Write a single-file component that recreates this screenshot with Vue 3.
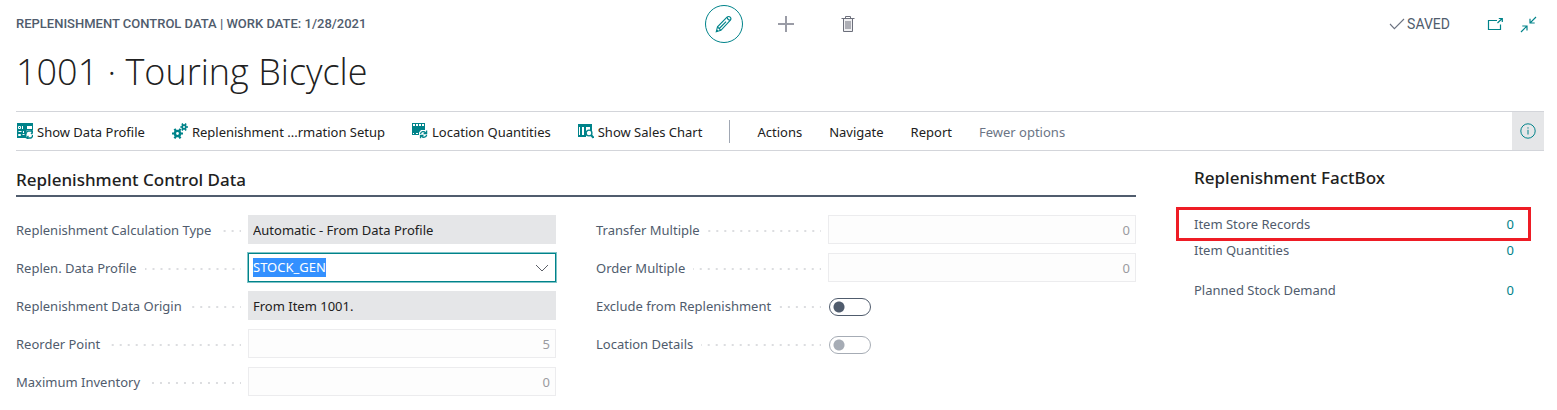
<script setup>
import { onMounted, ref } from 'vue'

const profile = ref('STOCK_GEN')
const profileInput = ref(null)
const exclude = ref(false)
const details = ref(false)

const actions = [
  { icon: 'profile', label: 'Show Data Profile' },
  { icon: 'gears', label: 'Replenishment ...rmation Setup' },
  { icon: 'quantities', label: 'Location Quantities' },
  { icon: 'chart', label: 'Show Sales Chart' },
]
const menus = ['Actions', 'Navigate', 'Report']

const facts = [
  { label: 'Item Store Records', value: 0, marked: true },
  { label: 'Item Quantities', value: 0 },
  { label: 'Planned Stock Demand', value: 0, spaced: true },
]

onMounted(() => {
  profileInput.value.focus()
  profileInput.value.select()
})
</script>

<template>
  <div class="page">
    <header class="top">
      <div class="caption">REPLENISHMENT CONTROL DATA | WORK DATE: 1/28/2021</div>
      <div class="tools">
        <button class="tool round" aria-label="Edit">
          <svg width="18" height="18" viewBox="0 0 18 18" fill="none" stroke="#00838a" stroke-width="1.1">
            <path d="M1.300 16.700l1.200-4.900L12 2.200c1-1 2.300-1 3.200-.1s.9 2.200 0 3.200L5.900 15.300z" />
            <path d="M2.500 11.800l3.400 3.500M12.300 2.300c0 1.900 1 2.900 2.900 2.900M4.300 13.500l6.800-6.900M1.300 16.700l1.500-1.500" />
          </svg>
        </button>
        <button class="tool" aria-label="New">
          <svg width="18" height="18" viewBox="0 0 18 18" fill="none" stroke="#9a9ca6" stroke-width="2">
            <path d="M9 1v16M1 9h16" />
          </svg>
        </button>
        <button class="tool" aria-label="Delete">
          <svg width="14" height="18" viewBox="0 0 14 18" fill="none" stroke="#6c6f7b">
            <path d="M2.500 3.500h9v13h-9z" fill="#f0f0f2" />
            <path d="M0.500 3.500h13M4.500 3.300V1.500h5v1.800M5 6v8M7 6v8M9 6v8" />
          </svg>
        </button>
      </div>
      <div class="status">
        <svg width="16" height="12" viewBox="0 0 16 12" fill="none" stroke="#6b7280" stroke-width="1.100">
          <path d="M1 6l4.400 4.600L15 1" />
        </svg>
        <span class="saved">SAVED</span>
        <button class="corner" aria-label="Open in new window">
          <svg width="17" height="14" viewBox="0 0 17 14" fill="none" stroke="#00838a" stroke-width="1.200">
            <path d="M10 3.500H1.500v9h12V7.500M10.500 6l4.700-4.500M11.800 1.500h3.500v3.400" />
          </svg>
        </button>
        <button class="corner" aria-label="Collapse">
          <svg width="17" height="17" viewBox="0 0 17 17" fill="none" stroke="#00838a" stroke-width="1.200">
            <path d="M16 1l-5.800 5.800M10 2.700v4.300h4.700M1 16l5.800-5.800M2.300 10H7v4.600" />
          </svg>
        </button>
      </div>
    </header>

    <h1 class="title">1001 · Touring Bicycle</h1>

    <nav class="toolbar">
      <button v-for="a in actions" :key="a.label" class="action">
        <svg v-if="a.icon === 'profile'" width="16" height="16" viewBox="0 0 16 16">
          <path d="M0 0h16v7.500H9.500V15H0z" fill="#00838a" />
          <path d="M10 3h5v3h-5z" fill="#fff" />
          <g fill="none" stroke="#fff">
            <path d="M1.500 3.500h2v2h-2zM5.500 3v3M1.500 8.500h3M6.500 8v2M1.500 11.500h2v1h-2zM5.500 11.500h2" />
          </g>
          <path d="M9 11V9.500l2-1.300h4v3M15.500 12v1.500L14 15h-4M14 7l2 2-2 2M11.500 13l-2 1.800 2 1.200" fill="none" stroke="#00838a" stroke-width="1.300" />
        </svg>
        <svg v-else-if="a.icon === 'gears'" width="16" height="16" viewBox="0 0 16 16" fill="none" stroke="#00838a">
          <circle cx="5.500" cy="10.500" r="2.600" stroke-width="2.400" />
          <path d="M2.500 5.800l1.700 2.500M8.500 5.800L6.800 8.300M0 10.500h3M8 10.500h3M2.500 15.300l1.700-2.500M8.500 15.300l-1.700-2.500" stroke-width="2.200" />
          <circle cx="12" cy="4" r="1.800" stroke-width="1.700" />
          <path d="M10 .5l1 1.800M14 .5l-1 1.800M8.300 4h2M13.700 4H16M10 7.500l1-1.800M14 7.500l-1-1.800" stroke-width="1.600" />
        </svg>
        <svg v-else-if="a.icon === 'quantities'" width="16" height="16" viewBox="0 0 16 16">
          <path d="M0 0h13v7H9L7 9.500V12H0z" fill="#00838a" />
          <path d="M1 1h2v2H1zM4 1h2v2H4zM7 1h2v2H7zM10 1h2v2h-2zM1 10h1v1H1zM4 10h2v1H4z" fill="#fff" />
          <path d="M8.500 11c.4-2.500 3.500-3.200 5.200-1.200M14.600 7.500v3h-3M14.700 11.800c-.6 2.700-3.700 3.200-5.200 1.200M8.500 15.300v-3h3" fill="none" stroke="#00838a" stroke-width="1.300" />
        </svg>
        <svg v-else width="16" height="16" viewBox="0 0 16 16">
          <path d="M0 1h14v7h-2.500L8 10v4H0z" fill="#00838a" />
          <path d="M1 4h1v8H1zM4 4h2v8H4zM8 4h4v3L8 8.500z" fill="#fff" />
          <circle cx="11" cy="10" r="2.900" fill="#fff" stroke="#00838a" stroke-width="1.400" />
          <path d="M13 12l2.500 2.700" fill="none" stroke="#00838a" stroke-width="2" />
        </svg>
        <span>{{ a.label }}</span>
      </button>
      <span class="divider"></span>
      <button v-for="m in menus" :key="m" class="action"><span>{{ m }}</span></button>
      <button class="action fewer"><span>Fewer options</span></button>
      <button class="info" aria-label="Toggle FactBox pane">
        <svg width="16" height="16" viewBox="0 0 16 16" fill="none" stroke="#00838a">
          <circle cx="8" cy="8" r="7.200" />
          <path d="M8 6.800v4.700M8 4.300v1.300" />
        </svg>
      </button>
    </nav>

    <div class="body">
      <main class="main">
        <h2 class="heading ruled">Replenishment Control Data</h2>
        <div class="columns">
          <div class="fields">
            <div class="field">
              <label for="calc">Replenishment Calculation Type</label>
              <input id="calc" class="box filled" value="Automatic - From Data Profile" readonly />
            </div>
            <div class="field">
              <label for="profile">Replen. Data Profile</label>
              <div class="box combo">
                <input id="profile" ref="profileInput" v-model="profile" class="entry" spellcheck="false" />
                <button class="open" aria-label="Choose a value for Replen. Data Profile">
                  <svg width="14" height="8" viewBox="0 0 14 8" fill="none" stroke="#5c6068">
                    <path d="M1 1l6 6 6-6" />
                  </svg>
                </button>
              </div>
            </div>
            <div class="field">
              <label for="origin">Replenishment Data Origin</label>
              <input id="origin" class="box filled" value="From Item 1001." readonly />
            </div>
            <div class="field">
              <label for="reorder">Reorder Point</label>
              <input id="reorder" class="box number" value="5" disabled />
            </div>
            <div class="field">
              <label for="maximum">Maximum Inventory</label>
              <input id="maximum" class="box number" value="0" disabled />
            </div>
          </div>
          <div class="fields">
            <div class="field">
              <label for="transfer">Transfer Multiple</label>
              <input id="transfer" class="box number" value="0" disabled />
            </div>
            <div class="field">
              <label for="order">Order Multiple</label>
              <input id="order" class="box number" value="0" disabled />
            </div>
            <div class="field">
              <label for="exclude">Exclude from Replenishment</label>
              <input id="exclude" v-model="exclude" class="switch" type="checkbox" role="switch" />
            </div>
            <div class="field">
              <label for="details">Location Details</label>
              <input id="details" v-model="details" class="switch" type="checkbox" role="switch" disabled />
            </div>
          </div>
        </div>
      </main>

      <aside class="factbox">
        <h2 class="heading">Replenishment FactBox</h2>
        <dl class="facts">
          <div v-for="f in facts" :key="f.label" class="fact" :class="{ marked: f.marked, spaced: f.spaced }">
            <dt>{{ f.label }}</dt>
            <dd><a href="#">{{ f.value }}</a></dd>
          </div>
        </dl>
      </aside>
    </div>
  </div>
</template>

<style>
body {
  margin: 0;
  background: #fff;
}
</style>

<style scoped>
.page {
  padding-left: 16px;
  font-family: 'Noto Sans', 'Open Sans', sans-serif;
  font-size: 13px;
  line-height: 19px;
  color: #212121;
}
button,
input {
  margin: 0;
  padding: 0;
  border: 0;
  border-radius: 0;
  background: none;
  font: inherit;
  color: inherit;
  box-sizing: border-box;
}
svg {
  display: block;
  flex: none;
}
.top {
  display: grid;
  grid-template-columns: 1fr auto 1fr;
  align-items: center;
  height: 48px;
  padding-right: 2px;
}
.caption,
.saved {
  font-family: Roboto, sans-serif;
  font-size: 13px;
  font-weight: 500;
  line-height: 20px;
  color: #505c6d;
  white-space: nowrap;
}
.tools {
  display: flex;
  gap: 24px;
}
.tool {
  display: flex;
  align-items: center;
  justify-content: center;
  width: 38px;
  height: 38px;
}
.round {
  border: 1px solid #00838a;
  border-radius: 50%;
}
.status {
  display: flex;
  align-items: center;
  justify-content: flex-end;
  padding-right: 18px;
}
.corner {
  margin-left: 16px;
}
.saved {
  margin: 0 21px 0 2px;
  font-size: 14px;
  font-weight: 400;
}
.title {
  margin: 0;
  font-family: 'Open Sans', 'Noto Sans', sans-serif;
  font-size: 36px;
  font-weight: 300;
  line-height: 48px;
}
.toolbar {
  display: flex;
  align-items: center;
  gap: 27px;
  height: 38px;
  margin: 15px 13px 0 0;
  padding-left: 1px;
  border-top: 1px solid #d3d5da;
  border-bottom: 1px solid #d3d5da;
}
.action {
  display: flex;
  align-items: center;
  gap: 4px;
  white-space: nowrap;
}
.action span {
  padding-top: 2px;
}
.fewer {
  color: #6b7585;
}
.divider {
  width: 1px;
  height: 23px;
  background: #a0a7b3;
}
.info {
  display: flex;
  align-items: center;
  justify-content: center;
  align-self: stretch;
  width: 32px;
  margin-left: auto;
  background: #e5e6e8;
}
.body {
  display: grid;
  grid-template-columns: 1fr 355px;
  column-gap: 40px;
  margin-right: 26px;
}
.main {
  padding-top: 15px;
}
.heading {
  margin: 0;
  padding-bottom: 2px;
  font-size: 17px;
  font-weight: 500;
  line-height: 27px;
}
.ruled {
  border-bottom: 2px solid #505c6d;
}
.columns {
  display: grid;
  grid-template-columns: 1fr 1fr;
  column-gap: 40px;
  align-items: start;
  margin-top: 18px;
}
.fields {
  display: grid;
  row-gap: 9px;
}
.field {
  display: grid;
  grid-template-columns: 225px 1fr;
  column-gap: 7px;
  align-items: center;
  min-height: 29px;
}
.field label {
  display: flex;
  align-items: center;
  gap: 8px;
  padding-top: 2px;
  color: #505c6d;
  white-space: nowrap;
}
.field label::after {
  content: '';
  flex: 1;
  height: 2px;
  background: linear-gradient(90deg, #dcdde0 1px, transparent 1px 7px, #dcdde0 7px) right / 8px 2px repeat-x;
}
.box {
  width: 100%;
  height: 29px;
  padding: 0 5px;
}
.filled {
  background: #e5e6e8;
}
.number {
  border: 1px solid #ececee;
  background: #fdfdfd;
  color: #9a9ba0;
  text-align: right;
}
.combo {
  display: flex;
  align-items: center;
  box-sizing: border-box;
  padding: 0 6px 0 4px;
  border: 1px solid #00838a;
  box-shadow: 0 0 0 1px #80c4c8;
}
.entry {
  flex: 1;
  min-width: 0;
  outline: none;
}
.entry::selection {
  background: #3390ff;
  color: #fff;
}
.switch {
  appearance: none;
  width: 42px;
  height: 18px;
  margin: 2px 0 0 1px;
  border: 1px solid #505c6d;
  border-radius: 9px;
  background: radial-gradient(circle at 9px 8px, #505c6d 5px, transparent 6px);
}
.switch:checked {
  background: radial-gradient(circle at 31px 8px, #505c6d 5px, transparent 6px);
}
.switch:disabled {
  opacity: 0.5;
}
.factbox {
  padding: 13px 17px 0 18px;
}
.facts {
  margin: 18px 0 0;
}
.fact {
  position: relative;
  display: flex;
  align-items: center;
  justify-content: space-between;
  height: 26px;
  color: #505c6d;
}
.fact dd {
  margin: 0;
}
.fact a {
  color: #00838a;
  text-decoration: none;
}
.spaced {
  margin-top: 14px;
}
.marked::after {
  content: '';
  position: absolute;
  inset: -4px -17px -4px -18px;
  border: 3px solid #ee1c25;
  pointer-events: none;
}
</style>
